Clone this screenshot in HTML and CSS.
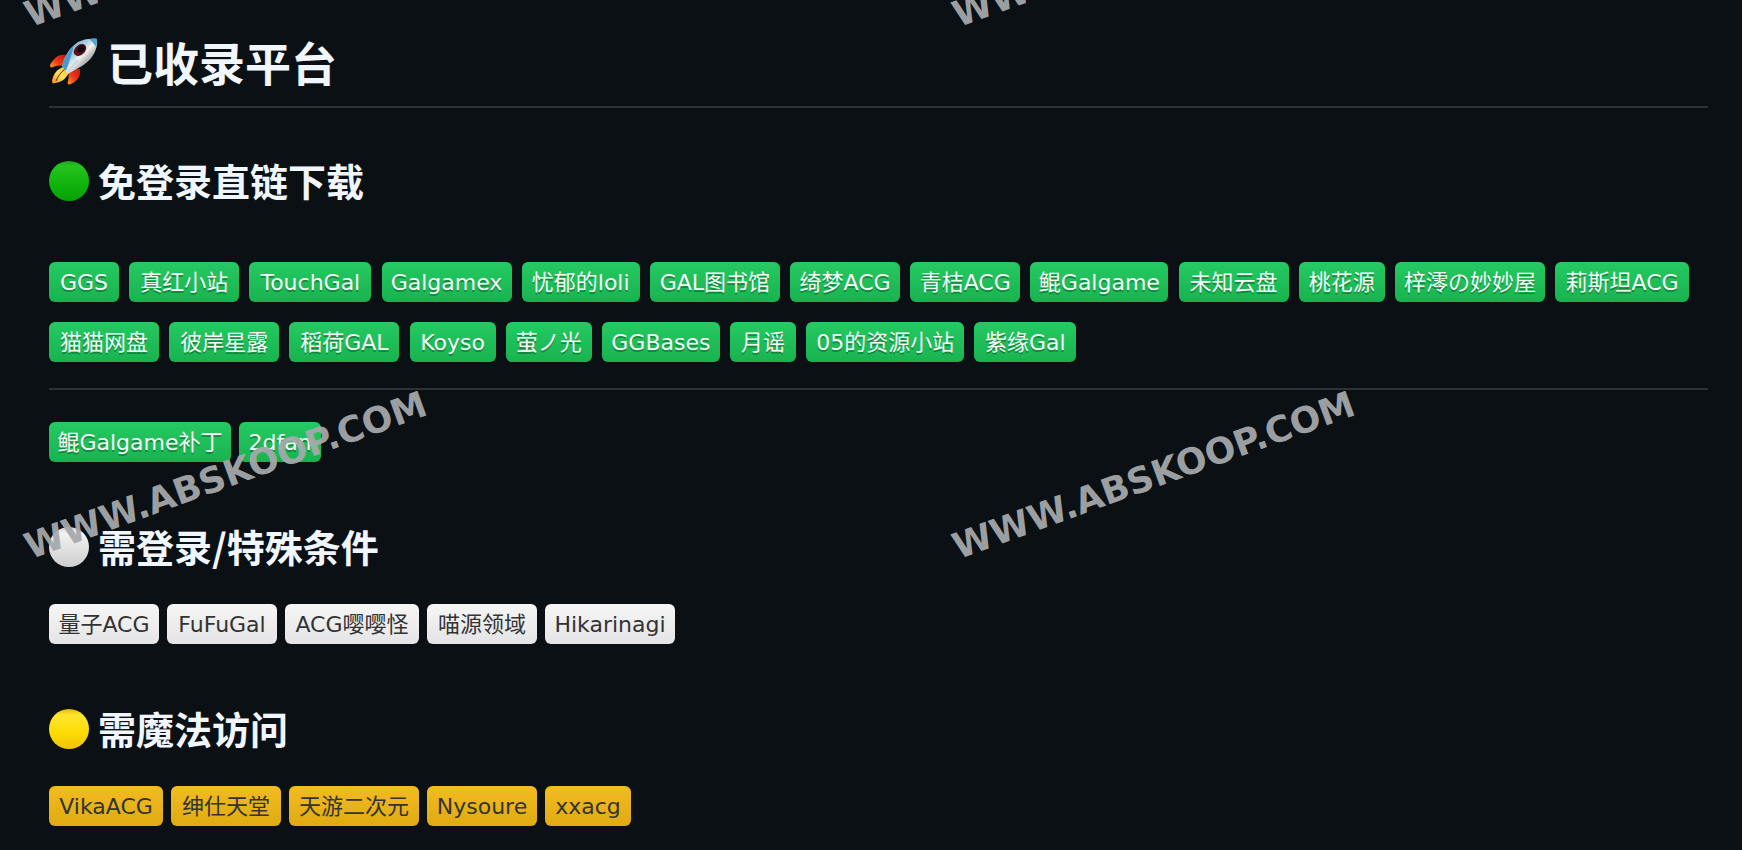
FILE: index.html
```html
<!DOCTYPE html>
<html lang="zh-CN">
<head>
<meta charset="utf-8">
<title>已收录平台</title>
<link rel="stylesheet" href="styles.css">
</head>
<body>
<svg class="defs" aria-hidden="true">
  <defs>
    <linearGradient id="g-green" x1="0" y1="0" x2="0" y2="1"><stop offset="0" stop-color="#16a51b"/><stop offset=".12" stop-color="#25c41f"/><stop offset=".6" stop-color="#0fb30b"/><stop offset="1" stop-color="#07a004"/></linearGradient>
    <linearGradient id="g-white" x1="0" y1="0" x2="0" y2="1"><stop offset="0" stop-color="#d0d0d0"/><stop offset=".15" stop-color="#f2f2f2"/><stop offset=".6" stop-color="#dedede"/><stop offset="1" stop-color="#cfcfcf"/></linearGradient>
    <linearGradient id="g-yellow" x1="0" y1="0" x2="0" y2="1"><stop offset="0" stop-color="#e8b80c"/><stop offset=".15" stop-color="#ffe52e"/><stop offset=".6" stop-color="#fddc05"/><stop offset="1" stop-color="#f0c400"/></linearGradient>
    <linearGradient id="g-hull" x1="0" y1="0" x2="1" y2="1"><stop offset="0" stop-color="#4f9fcc"/><stop offset=".4" stop-color="#a9cfe2"/><stop offset=".52" stop-color="#f2f2f0"/><stop offset=".8" stop-color="#77797c"/></linearGradient>
    <linearGradient id="g-fin" x1="1" y1="0" x2="0" y2="1"><stop offset="0" stop-color="#c4160f"/><stop offset=".55" stop-color="#ee3a14"/><stop offset="1" stop-color="#ff9c2a"/></linearGradient>
    <linearGradient id="g-flame" x1="1" y1="0" x2="0" y2="1"><stop offset="0" stop-color="#ffb52c"/><stop offset=".5" stop-color="#ffe35a"/><stop offset="1" stop-color="#f08a1c"/></linearGradient>
  </defs>
</svg>
<main class="readme">
  <h1 class="title">
    <svg class="rocket" viewBox="0 0 48 48" aria-hidden="true">
      <path d="M17 17C11 16 6 18 1 27c0 2 1 3 3 2 4-2 8-2 13 0z" fill="url(#g-fin)"/>
      <path d="M31 31c1 6-2 12-9 15-3 1-4 0-3-3 1-4 1-8 0-12z" fill="url(#g-fin)"/>
      <path d="M15 29C9 30 4 36 3 43c0 2 1 3 3 2 7-1 12-5 14-11z" fill="url(#g-flame)"/>
      <path d="M16 31c-4 3-7 7-9 12" stroke="#5a2408" stroke-width="1" fill="none"/>
      <path d="M48 1c1 10-4 20-15 27l-14 8-6-8c2-9 7-18 16-24C35 1 41 0 48 1z" fill="url(#g-hull)"/>
      <path d="M25 8c-6 5-10 12-12 20l4 5c3-8 5-15 8-25z" fill="#4a9bcb"/>
      <path d="M40 1c3 0 6-1 8 0 0 3 0 5-1 8-2-3-4-6-7-8z" fill="#55a5cf"/>
      <ellipse cx="31" cy="12" rx="7" ry="5" transform="rotate(-40 31 12)" fill="#5b1119"/>
      <ellipse cx="32" cy="11" rx="4" ry="3" transform="rotate(-40 32 11)" fill="#120a10"/>
      <path d="M29 22c-4 4-8 8-11 13" stroke="#c9d6de" stroke-width="2" fill="none"/>
    </svg>
    <span class="label">已收录平台</span>
  </h1>

  <section class="group group-open">
    <h2 class="heading"><svg class="dot" viewBox="0 0 40 40" aria-hidden="true"><circle cx="20" cy="20" r="20" fill="url(#g-green)"/></svg><span class="label">免登录直链下载</span></h2>
    <div class="badges-wide">
      <a class="badge green w70" href="#">GGS</a>
      <a class="badge green w110" href="#">真红小站</a>
      <a class="badge green w122" href="#">TouchGal</a>
      <a class="badge green w130" href="#">Galgamex</a>
      <a class="badge green w118" href="#">忧郁的loli</a>
      <a class="badge green w130" href="#">GAL图书馆</a>
      <a class="badge green w110" href="#">绮梦ACG</a>
      <a class="badge green w110" href="#">青桔ACG</a>
      <a class="badge green w138" href="#">鲲Galgame</a>
      <a class="badge green w110" href="#">未知云盘</a>
      <a class="badge green w86" href="#">桃花源</a>
      <a class="badge green w150" href="#">梓澪の妙妙屋</a>
      <a class="badge green w134" href="#">莉斯坦ACG</a>
      <a class="badge green w110" href="#">猫猫网盘</a>
      <a class="badge green w110" href="#">彼岸星露</a>
      <a class="badge green w110" href="#">稻荷GAL</a>
      <a class="badge green w86" href="#">Koyso</a>
      <a class="badge green w86" href="#">萤ノ光</a>
      <a class="badge green w118" href="#">GGBases</a>
      <a class="badge green w66" href="#">月谣</a>
      <a class="badge green w158" href="#">05的资源小站</a>
      <a class="badge green w102" href="#">紫缘Gal</a>
    </div>
    <div class="badges extra">
      <a class="badge green w182" href="#">鲲Galgame补丁</a>
      <a class="badge green w82" href="#">2dfan</a>
    </div>
  </section>

  <section class="group">
    <h2 class="heading"><svg class="dot" viewBox="0 0 40 40" aria-hidden="true"><circle cx="20" cy="20" r="20" fill="url(#g-white)"/></svg><span class="label">需登录/特殊条件</span></h2>
    <div class="badges">
      <a class="badge white w110" href="#">量子ACG</a>
      <a class="badge white w110" href="#">FuFuGal</a>
      <a class="badge white w134" href="#">ACG嘤嘤怪</a>
      <a class="badge white w110" href="#">喵源领域</a>
      <a class="badge white w130" href="#">Hikarinagi</a>
    </div>
  </section>

  <section class="group">
    <h2 class="heading"><svg class="dot" viewBox="0 0 40 40" aria-hidden="true"><circle cx="20" cy="20" r="20" fill="url(#g-yellow)"/></svg><span class="label">需魔法访问</span></h2>
    <div class="badges">
      <a class="badge yellow w114" href="#">VikaACG</a>
      <a class="badge yellow w110" href="#">绅仕天堂</a>
      <a class="badge yellow w130" href="#">天游二次元</a>
      <a class="badge yellow w110" href="#">Nysoure</a>
      <a class="badge yellow w86" href="#">xxacg</a>
    </div>
  </section>
</main>
<div class="watermarks" aria-hidden="true">
  <span class="mark mark-left mark-top">WWW.ABSKOOP.COM</span>
  <span class="mark mark-right mark-top">WWW.ABSKOOP.COM</span>
  <span class="mark mark-left mark-low">WWW.ABSKOOP.COM</span>
  <span class="mark mark-right mark-low">WWW.ABSKOOP.COM</span>
</div>
</body>
</html>
```
FILE: styles.css
```css
* { box-sizing: border-box; }

body {
  margin: 0;
  position: relative;
  overflow-x: hidden;
  background: #0b1015;
  color: #f0f6fc;
  font-family: "DejaVu Sans", "Noto Sans CJK SC", sans-serif;
}

.defs { position: absolute; width: 0; height: 0; }

.readme { padding: 34px 34px 24px 49px; }

.title,
.heading {
  margin: 0;
  display: flex;
  align-items: center;
  font-family: "Noto Sans CJK SC", sans-serif;
  font-weight: 700;
}

.title {
  gap: 10px;
  padding-bottom: 16px;
  border-bottom: 2px solid #2c3237;
  font-size: 46px;
  line-height: 54px;
}

.label { padding-bottom: 2px; }

.rocket { width: 48px; height: 48px; }

.heading {
  gap: 9px;
  font-size: 38px;
  line-height: 46px;
}

.dot { width: 40px; height: 40px; }

.group { padding-top: 61px; }

.group-open { padding-top: 49px; }

.badges {
  display: flex;
  flex-wrap: wrap;
  gap: 20px 8px;
  margin-top: 33px;
}

/* Badges flow inline here, parted by a word space */
.badges-wide {
  margin-top: 57px;
  font-size: 32px;
  line-height: 60px;
}

.badges-wide .badge { vertical-align: top; }

.extra {
  margin-top: 6px;
  padding-top: 32px;
  border-top: 2px solid #2c3237;
}

.badge {
  display: inline-flex;
  justify-content: center;
  height: 40px;
  border-radius: 6px;
  font-size: 22px;
  line-height: 42px;
  white-space: nowrap;
  text-decoration: none;
}

.w66 { width: 66px; }
.w70 { width: 70px; }
.w82 { width: 82px; }
.w86 { width: 86px; }
.w102 { width: 102px; }
.w110 { width: 110px; }
.w114 { width: 114px; }
.w118 { width: 118px; }
.w122 { width: 122px; }
.w130 { width: 130px; }
.w134 { width: 134px; }
.w138 { width: 138px; }
.w150 { width: 150px; }
.w158 { width: 158px; }
.w182 { width: 182px; }

.green {
  color: #f4fff8;
  background: linear-gradient(#25c962, #18b350);
  text-shadow: 0 2px 0 rgba(1, 1, 1, 0.3);
}

.white {
  color: #333;
  background: linear-gradient(#f6f6f6, #e4e4e6);
}

.yellow {
  color: #333;
  background: linear-gradient(#f2bb22, #dfab10);
}

.watermarks {
  position: absolute;
  inset: 0;
  overflow: hidden;
  pointer-events: none;
}

.mark {
  position: absolute;
  color: rgba(166, 169, 172, 0.94);
  font-size: 36px;
  font-weight: 700;
  line-height: 40px;
  white-space: nowrap;
  transform: rotate(-20deg);
  transform-origin: 0 100%;
}

.mark-left { left: 33px; }
.mark-right { left: 961px; }
.mark-top { top: -5px; }
.mark-low { top: 527px; }
```
